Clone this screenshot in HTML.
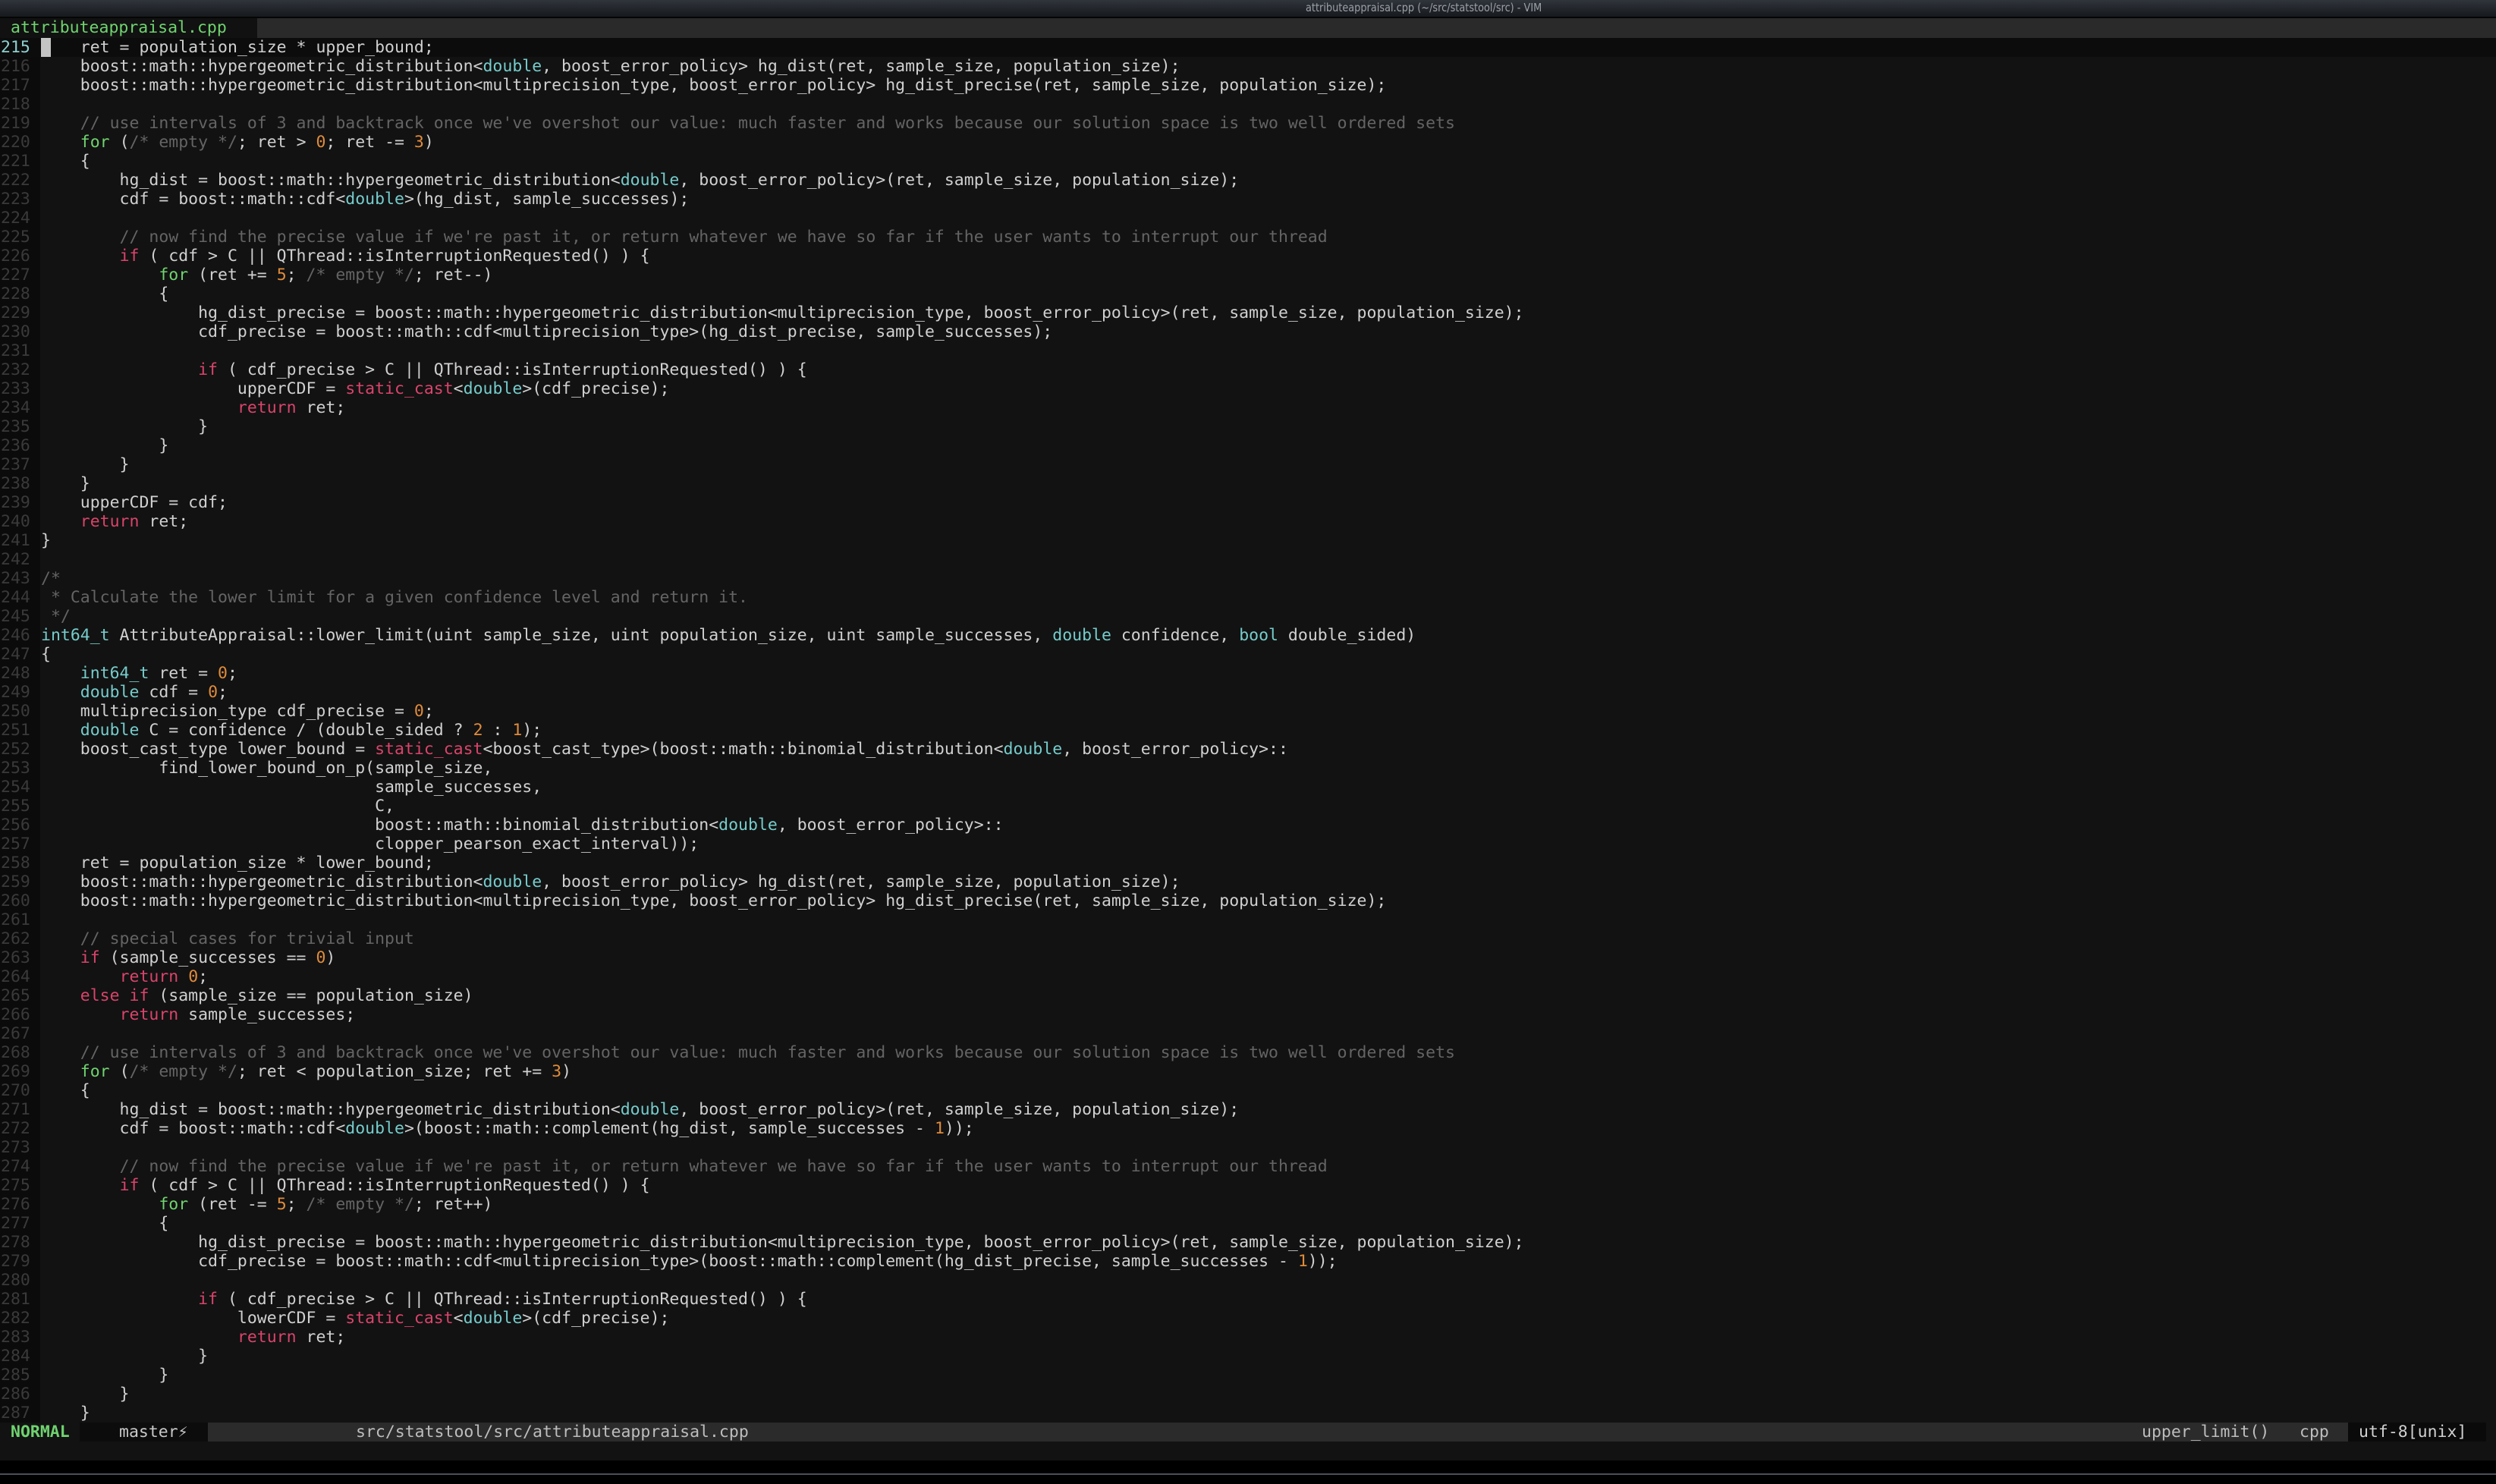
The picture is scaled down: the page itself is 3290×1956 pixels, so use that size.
<!DOCTYPE html>
<html><head><meta charset="utf-8"><style>
html,body{margin:0;padding:0;width:3290px;height:1956px;background:#000;overflow:hidden}
body{font-family:"DejaVu Sans Mono","Liberation Mono",monospace;font-size:21.5px;color:#d0d0d0;position:relative}
#title{position:absolute;left:0;top:0;width:3290px;height:22px;background:linear-gradient(#30343b,#16191d);border-bottom:2px solid #050505}
#title span{position:absolute;left:1721px;top:1px;font-family:"DejaVu Sans","Liberation Sans",sans-serif;font-size:15px;color:#9aa0a6;transform:scaleX(.86);transform-origin:left}
#tabs{position:absolute;left:0;top:24px;width:3290px;height:26px;background:#2a2a2a}
#tabs .sel{position:absolute;left:0;top:0;width:339px;height:26px;background:#111;color:#6fd36f;line-height:26px;padding-left:14px;box-sizing:border-box}
#ed{position:absolute;left:0;top:50px;width:3290px;height:1825px;background:#121212}
#gut{position:absolute;left:0;top:0;width:53px;height:1825px;background:#0b0b0b}
.l{position:absolute;left:0;height:25px;line-height:25px;white-space:pre;width:3290px}
.n{display:inline-block;width:54px;color:#3a3a3a;padding-left:1px;box-sizing:border-box}
.cl{background:#0c0c0c}
.cl .n{color:#8fd0d0}
.k{color:#d9446b}.g{color:#6fd36f}.t{color:#76cccc}.o{color:#e08b3a}.c{color:#646464}
.cur{background:#c4c4c4;color:#111}
#st{position:absolute;left:0;top:1875px;width:3290px;height:25px;line-height:25px;background:#121212;white-space:pre}
#cmd{position:absolute;left:0;top:1900px;width:3290px;height:25px;background:#121212}
#sep{position:absolute;left:0;top:1942px;width:3290px;height:2px;background:#4a5058}
</style></head><body>
<div id="title"><span>attributeappraisal.cpp (~/src/statstool/src) - VIM</span></div>
<div id="tabs"><div class="sel">attributeappraisal.cpp</div></div>
<div id="ed"><div id="gut"></div>
<div class="l cl" style="top:0"><span class="n">215</span><span class="cur"> </span>   ret = population_size * upper_bound;</div>
<div class="l" style="top:25px"><span class="n">216</span>    boost::math::hypergeometric_distribution&lt;<span class="t">double</span>, boost_error_policy&gt; hg_dist(ret, sample_size, population_size);</div>
<div class="l" style="top:50px"><span class="n">217</span>    boost::math::hypergeometric_distribution&lt;multiprecision_type, boost_error_policy&gt; hg_dist_precise(ret, sample_size, population_size);</div>
<div class="l" style="top:75px"><span class="n">218</span></div>
<div class="l" style="top:100px"><span class="n">219</span>    <span class="c">// use intervals of 3 and backtrack once we've overshot our value: much faster and works because our solution space is two well ordered sets</span></div>
<div class="l" style="top:125px"><span class="n">220</span>    <span class="g">for</span> (<span class="c">/* empty */</span>; ret &gt; <span class="o">0</span>; ret -= <span class="o">3</span>)</div>
<div class="l" style="top:150px"><span class="n">221</span>    {</div>
<div class="l" style="top:175px"><span class="n">222</span>        hg_dist = boost::math::hypergeometric_distribution&lt;<span class="t">double</span>, boost_error_policy&gt;(ret, sample_size, population_size);</div>
<div class="l" style="top:200px"><span class="n">223</span>        cdf = boost::math::cdf&lt;<span class="t">double</span>&gt;(hg_dist, sample_successes);</div>
<div class="l" style="top:225px"><span class="n">224</span></div>
<div class="l" style="top:250px"><span class="n">225</span>        <span class="c">// now find the precise value if we're past it, or return whatever we have so far if the user wants to interrupt our thread</span></div>
<div class="l" style="top:275px"><span class="n">226</span>        <span class="k">if</span> ( cdf &gt; C || QThread::isInterruptionRequested() ) {</div>
<div class="l" style="top:300px"><span class="n">227</span>            <span class="g">for</span> (ret += <span class="o">5</span>; <span class="c">/* empty */</span>; ret--)</div>
<div class="l" style="top:325px"><span class="n">228</span>            {</div>
<div class="l" style="top:350px"><span class="n">229</span>                hg_dist_precise = boost::math::hypergeometric_distribution&lt;multiprecision_type, boost_error_policy&gt;(ret, sample_size, population_size);</div>
<div class="l" style="top:375px"><span class="n">230</span>                cdf_precise = boost::math::cdf&lt;multiprecision_type&gt;(hg_dist_precise, sample_successes);</div>
<div class="l" style="top:400px"><span class="n">231</span></div>
<div class="l" style="top:425px"><span class="n">232</span>                <span class="k">if</span> ( cdf_precise &gt; C || QThread::isInterruptionRequested() ) {</div>
<div class="l" style="top:450px"><span class="n">233</span>                    upperCDF = <span class="k">static_cast</span>&lt;<span class="t">double</span>&gt;(cdf_precise);</div>
<div class="l" style="top:475px"><span class="n">234</span>                    <span class="k">return</span> ret;</div>
<div class="l" style="top:500px"><span class="n">235</span>                }</div>
<div class="l" style="top:525px"><span class="n">236</span>            }</div>
<div class="l" style="top:550px"><span class="n">237</span>        }</div>
<div class="l" style="top:575px"><span class="n">238</span>    }</div>
<div class="l" style="top:600px"><span class="n">239</span>    upperCDF = cdf;</div>
<div class="l" style="top:625px"><span class="n">240</span>    <span class="k">return</span> ret;</div>
<div class="l" style="top:650px"><span class="n">241</span>}</div>
<div class="l" style="top:675px"><span class="n">242</span></div>
<div class="l" style="top:700px"><span class="n">243</span><span class="c">/*</span></div>
<div class="l" style="top:725px"><span class="n">244</span><span class="c"> * Calculate the lower limit for a given confidence level and return it.</span></div>
<div class="l" style="top:750px"><span class="n">245</span><span class="c"> */</span></div>
<div class="l" style="top:775px"><span class="n">246</span><span class="t">int64_t</span> AttributeAppraisal::lower_limit(uint sample_size, uint population_size, uint sample_successes, <span class="t">double</span> confidence, <span class="t">bool</span> double_sided)</div>
<div class="l" style="top:800px"><span class="n">247</span>{</div>
<div class="l" style="top:825px"><span class="n">248</span>    <span class="t">int64_t</span> ret = <span class="o">0</span>;</div>
<div class="l" style="top:850px"><span class="n">249</span>    <span class="t">double</span> cdf = <span class="o">0</span>;</div>
<div class="l" style="top:875px"><span class="n">250</span>    multiprecision_type cdf_precise = <span class="o">0</span>;</div>
<div class="l" style="top:900px"><span class="n">251</span>    <span class="t">double</span> C = confidence / (double_sided ? <span class="o">2</span> : <span class="o">1</span>);</div>
<div class="l" style="top:925px"><span class="n">252</span>    boost_cast_type lower_bound = <span class="k">static_cast</span>&lt;boost_cast_type&gt;(boost::math::binomial_distribution&lt;<span class="t">double</span>, boost_error_policy&gt;::</div>
<div class="l" style="top:950px"><span class="n">253</span>            find_lower_bound_on_p(sample_size,</div>
<div class="l" style="top:975px"><span class="n">254</span>                                  sample_successes,</div>
<div class="l" style="top:1000px"><span class="n">255</span>                                  C,</div>
<div class="l" style="top:1025px"><span class="n">256</span>                                  boost::math::binomial_distribution&lt;<span class="t">double</span>, boost_error_policy&gt;::</div>
<div class="l" style="top:1050px"><span class="n">257</span>                                  clopper_pearson_exact_interval));</div>
<div class="l" style="top:1075px"><span class="n">258</span>    ret = population_size * lower_bound;</div>
<div class="l" style="top:1100px"><span class="n">259</span>    boost::math::hypergeometric_distribution&lt;<span class="t">double</span>, boost_error_policy&gt; hg_dist(ret, sample_size, population_size);</div>
<div class="l" style="top:1125px"><span class="n">260</span>    boost::math::hypergeometric_distribution&lt;multiprecision_type, boost_error_policy&gt; hg_dist_precise(ret, sample_size, population_size);</div>
<div class="l" style="top:1150px"><span class="n">261</span></div>
<div class="l" style="top:1175px"><span class="n">262</span>    <span class="c">// special cases for trivial input</span></div>
<div class="l" style="top:1200px"><span class="n">263</span>    <span class="k">if</span> (sample_successes == <span class="o">0</span>)</div>
<div class="l" style="top:1225px"><span class="n">264</span>        <span class="k">return</span> <span class="o">0</span>;</div>
<div class="l" style="top:1250px"><span class="n">265</span>    <span class="k">else</span> <span class="k">if</span> (sample_size == population_size)</div>
<div class="l" style="top:1275px"><span class="n">266</span>        <span class="k">return</span> sample_successes;</div>
<div class="l" style="top:1300px"><span class="n">267</span></div>
<div class="l" style="top:1325px"><span class="n">268</span>    <span class="c">// use intervals of 3 and backtrack once we've overshot our value: much faster and works because our solution space is two well ordered sets</span></div>
<div class="l" style="top:1350px"><span class="n">269</span>    <span class="g">for</span> (<span class="c">/* empty */</span>; ret &lt; population_size; ret += <span class="o">3</span>)</div>
<div class="l" style="top:1375px"><span class="n">270</span>    {</div>
<div class="l" style="top:1400px"><span class="n">271</span>        hg_dist = boost::math::hypergeometric_distribution&lt;<span class="t">double</span>, boost_error_policy&gt;(ret, sample_size, population_size);</div>
<div class="l" style="top:1425px"><span class="n">272</span>        cdf = boost::math::cdf&lt;<span class="t">double</span>&gt;(boost::math::complement(hg_dist, sample_successes - <span class="o">1</span>));</div>
<div class="l" style="top:1450px"><span class="n">273</span></div>
<div class="l" style="top:1475px"><span class="n">274</span>        <span class="c">// now find the precise value if we're past it, or return whatever we have so far if the user wants to interrupt our thread</span></div>
<div class="l" style="top:1500px"><span class="n">275</span>        <span class="k">if</span> ( cdf &gt; C || QThread::isInterruptionRequested() ) {</div>
<div class="l" style="top:1525px"><span class="n">276</span>            <span class="g">for</span> (ret -= <span class="o">5</span>; <span class="c">/* empty */</span>; ret++)</div>
<div class="l" style="top:1550px"><span class="n">277</span>            {</div>
<div class="l" style="top:1575px"><span class="n">278</span>                hg_dist_precise = boost::math::hypergeometric_distribution&lt;multiprecision_type, boost_error_policy&gt;(ret, sample_size, population_size);</div>
<div class="l" style="top:1600px"><span class="n">279</span>                cdf_precise = boost::math::cdf&lt;multiprecision_type&gt;(boost::math::complement(hg_dist_precise, sample_successes - <span class="o">1</span>));</div>
<div class="l" style="top:1625px"><span class="n">280</span></div>
<div class="l" style="top:1650px"><span class="n">281</span>                <span class="k">if</span> ( cdf_precise &gt; C || QThread::isInterruptionRequested() ) {</div>
<div class="l" style="top:1675px"><span class="n">282</span>                    lowerCDF = <span class="k">static_cast</span>&lt;<span class="t">double</span>&gt;(cdf_precise);</div>
<div class="l" style="top:1700px"><span class="n">283</span>                    <span class="k">return</span> ret;</div>
<div class="l" style="top:1725px"><span class="n">284</span>                }</div>
<div class="l" style="top:1750px"><span class="n">285</span>            }</div>
<div class="l" style="top:1775px"><span class="n">286</span>        }</div>
<div class="l" style="top:1800px"><span class="n">287</span>    }</div>
</div>
<div id="st">
<div style="position:absolute;left:14px;top:0;color:#6fd36f;font-weight:bold">NORMAL</div>
<div style="position:absolute;left:105px;top:0;width:169px;height:25px;background:#0c0c0c;color:#c8c8c8;padding-left:52px;box-sizing:border-box">master⚡</div>
<div style="position:absolute;left:274px;top:0;width:2821px;height:25px;background:#2b2b2b;color:#bdbdbd"></div>
<div style="position:absolute;left:469px;top:0;color:#bdbdbd">src/statstool/src/attributeappraisal.cpp</div>
<div style="position:absolute;left:2823px;top:0;color:#bdbdbd">upper_limit()</div>
<div style="position:absolute;left:3031px;top:0;color:#bdbdbd">cpp</div>
<div style="position:absolute;left:3095px;top:0;width:182px;height:25px;background:#0a0a0a;color:#d0d0d0;padding-left:14px;box-sizing:border-box">utf-8[unix]</div>
</div>
<div id="cmd"></div>
<div id="sep"></div>
</body></html>
